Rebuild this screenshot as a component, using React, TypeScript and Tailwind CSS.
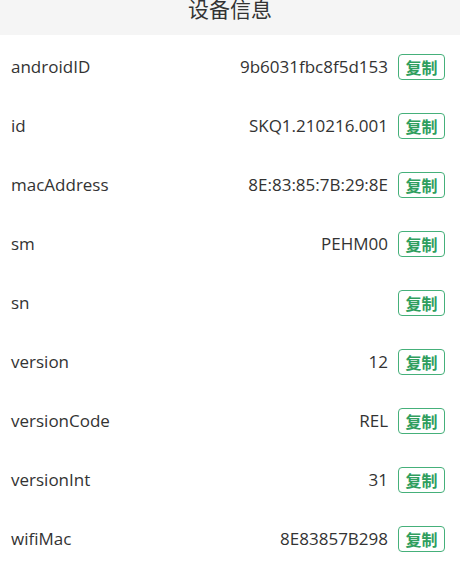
import React from "react";

const rows: [string, string][] = [
  ["androidID", "9b6031fbc8f5d153"],
  ["id", "SKQ1.210216.001"],
  ["macAddress", "8E:83:85:7B:29:8E"],
  ["sm", "PEHM00"],
  ["sn", ""],
  ["version", "12"],
  ["versionCode", "REL"],
  ["versionInt", "31"],
  ["wifiMac", "8E83857B298"],
];

export default function App() {
  return (
    <div className="w-[460px] h-[571px] overflow-hidden bg-white text-[#333333]" style={{ fontFamily: '"Open Sans", "Noto Sans CJK SC", sans-serif' }}>
      <div className="h-[35px] bg-[#f5f5f5] flex justify-center items-start overflow-hidden">
        <div className="text-[21px] leading-[21px] mt-[-2px] text-[#333333]" style={{ fontFamily: '"Noto Sans CJK SC", sans-serif' }}>设备信息</div>
      </div>
      <div className="pt-[2px]">
        {rows.map(([k, v]) => (
          <div key={k} className="h-[59px] flex items-center pl-[11px] pr-[15px]">
            <div className="flex-1 text-[17px]">{k}</div>
            <div className="text-[17px] mr-[10px]">{v}</div>
            <div className="w-[47px] h-[26px] border-[1.5px] border-[#45b07a] rounded-[4px] flex items-center justify-center text-[#2f9e5e] text-[16px] font-bold" style={{ fontFamily: '"Noto Sans CJK SC", sans-serif' }}>复制</div>
          </div>
        ))}
      </div>
    </div>
  );
}
